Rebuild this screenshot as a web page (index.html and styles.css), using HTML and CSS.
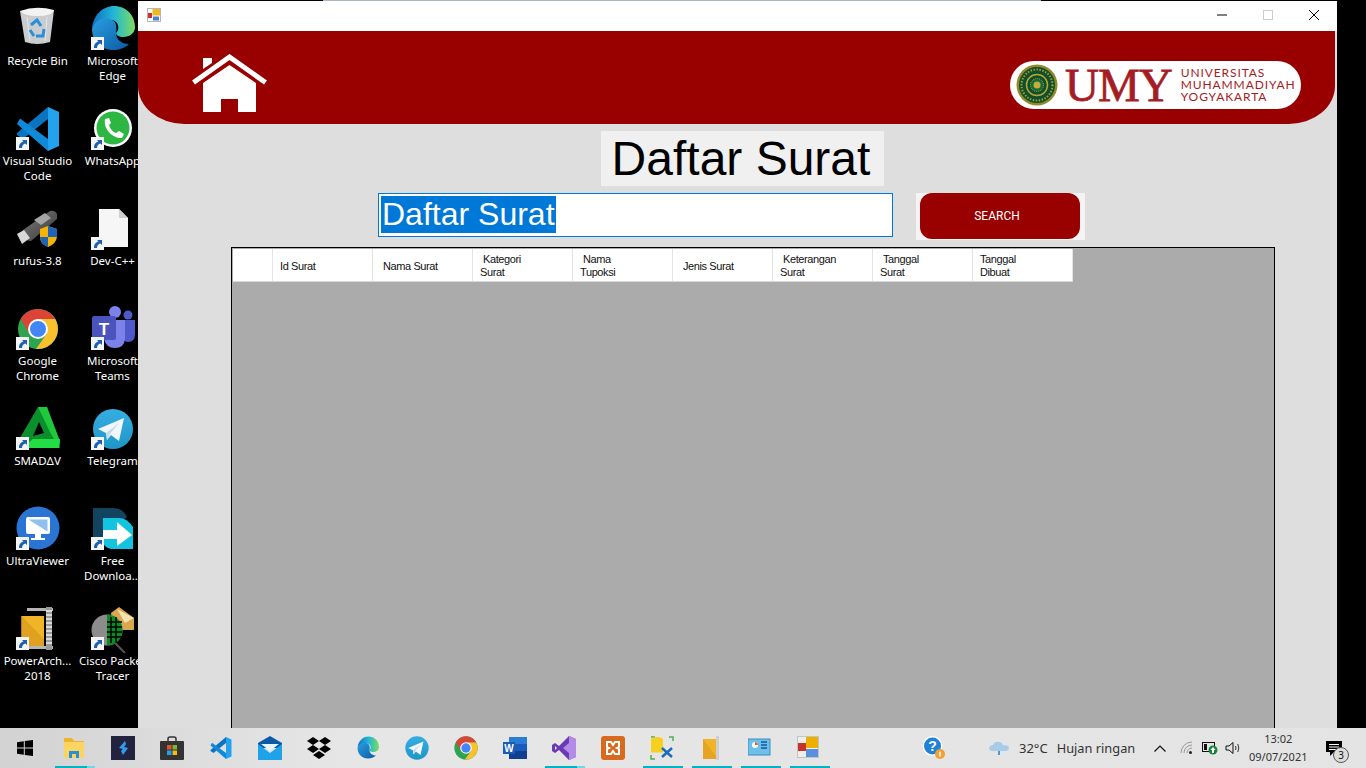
FILE: index.html
```html
<!DOCTYPE html>
<html lang="id">
<head>
  <meta charset="UTF-8" />
  <meta name="viewport" content="width=device-width, initial-scale=1" />
  <title>Daftar Surat</title>
  <link rel="stylesheet" href="styles.css">
</head>
<body>
  <svg class="defs" width="0" height="0">
    <defs>
      <linearGradient id="edgeA" x1="0" y1="0" x2="1" y2="1"><stop offset="0" stop-color="#2a9fe0"/><stop offset="1" stop-color="#0c59a4"/></linearGradient>
      <linearGradient id="edgeB" x1="0" y1="0.500" x2="1" y2="0.500"><stop offset="0" stop-color="#0f6fc0"/><stop offset="0.500" stop-color="#1fb6d8"/><stop offset="1" stop-color="#7fdc5f"/></linearGradient>
      <linearGradient id="tele" x1="0" y1="0" x2="0" y2="1"><stop offset="0" stop-color="#37aee2"/><stop offset="1" stop-color="#1e96c8"/></linearGradient>
      <linearGradient id="usb" x1="0" y1="0" x2="1" y2="1"><stop offset="0" stop-color="#777"/><stop offset="1" stop-color="#3c3c3c"/></linearGradient>
      <symbol id="i-shortcut" viewBox="0 0 13 13">
        <rect width="13" height="13" fill="#f4f4f4"/>
        <path d="M3 11 C3 7 5 5 7.500 4.500 L6 3 H11 V8 L9.400 6.400 C7.500 7 6 8.500 6 11 Z" fill="#1f5fb0"/>
      </symbol>
      <symbol id="i-edge" viewBox="0 0 48 48">
        <path d="M3 24 C4 10 14 1 25 1 C37 1 46 10 46 22 C46 28 41 32 34 32 C30 32 27 30 27 28 C31 25 30 16 23 15 C13 14 3 20 3 24 Z" fill="url(#edgeB)"/>
        <path d="M3 24 C6 14 16 11 23 15 C28 17 28 24 27 28 C27 34 32 39 40 39 C36 43 30 45 24 45 C12 45 3 36 3 24 Z" fill="url(#edgeA)"/>
      </symbol>
      <symbol id="i-vscode" viewBox="0 0 48 48">
        <polygon points="34,2 34,14 9,34 3,30 3,28" fill="#0a74c0"/>
        <polygon points="6,13.500 34,34 34,46 3,19" fill="#0f8ad8"/>
        <polygon points="34,2 45,7 45,41 34,46" fill="#23a3ee"/>
      </symbol>
      <symbol id="i-chrome" viewBox="0 0 48 48">
        <circle cx="24" cy="24" r="20" fill="#2da44e"/>
        <path d="M24 14 H41.300 A20 20 0 0 1 22 43.900 L32.700 29 Z" fill="#fbc02d"/>
        <path d="M6.700 14 A20 20 0 0 1 41.300 14 H24 L15.300 29 Z" fill="#db4437"/>
        <circle cx="24" cy="24" r="10" fill="#fff"/>
        <circle cx="24" cy="24" r="8" fill="#4285f4"/>
      </symbol>
      <symbol id="i-telegram" viewBox="0 0 48 48">
        <circle cx="24" cy="24" r="20" fill="url(#tele)"/>
        <path d="M9 24 L35 13 L30 36 L22 30 L18 35 L17 28 Z" fill="#f2f7fb"/>
        <path d="M17 28 L30 18 L21 29 L18 35 Z" fill="#c8daea"/>
      </symbol>
    </defs>
  </svg>

  <div class="screen">
    <aside class="desktop">
      <div class="tile">
        <div class="tile-icon">
          <svg viewBox="0 0 48 48"><path d="M6 6 L40 5 L36 37 Q23 41 11 37 Z" fill="#c9cdd0"/><path d="M6 6 Q22 0 40 5 Q38 11 24 11 Q10 11 6 6 Z" fill="#f3f3f3"/><path d="M13 12 L16 36 M33 12 L31 36" stroke="#e6e6e6"/><path d="M17 20 L23 15 L27 21 M30 24 L29 31 L22 31 M16 25 L20 31" stroke="#2a8fd8" stroke-width="3" fill="none"/></svg>
        </div>
        <span class="tile-label">Recycle Bin</span>
      </div>
      <div class="tile">
        <div class="tile-icon"><svg><use href="#i-edge"/></svg><svg class="shortcut"><use href="#i-shortcut"/></svg></div>
        <span class="tile-label">Microsoft<br>Edge</span>
      </div>
      <div class="tile">
        <div class="tile-icon"><svg><use href="#i-vscode"/></svg><svg class="shortcut"><use href="#i-shortcut"/></svg></div>
        <span class="tile-label">Visual Studio<br>Code</span>
      </div>
      <div class="tile">
        <div class="tile-icon">
          <svg viewBox="0 0 48 48"><circle cx="24" cy="23" r="19" fill="#fff"/><circle cx="24" cy="23" r="16.500" fill="#2bb741"/><path d="M16 14 L20 13 L22 18 L20 20 C21 24 24 27 27 28 L30 26 L35 29 L33 33 C25 34 14 25 16 14 Z" fill="#fff"/></svg>
          <svg class="shortcut"><use href="#i-shortcut"/></svg>
        </div>
        <span class="tile-label">WhatsApp</span>
      </div>
      <div class="tile">
        <div class="tile-icon">
          <svg viewBox="0 0 48 48"><path d="M9 25 L36 6 Q41 5 43 9 L43 14 L17 36 L11 35 Z" fill="url(#usb)"/><path d="M20 15 L31 8 L37 13 L27 20 Z" fill="#a5a5a5"/><path d="M3 29 L10 25 L16 33 L8 39 Z" fill="#d8d8d8"/><path d="M26 24 L34 21 L43 24 V32 Q42 39 34 42 Q26 39 26 32 Z" fill="#f4b400"/><path d="M34 21 L43 24 V32 H34 Z M26 32 H34 V42 Q26 39 26 32 Z" fill="#1d63b8"/></svg>
        </div>
        <span class="tile-label">rufus-3.8</span>
      </div>
      <div class="tile">
        <div class="tile-icon">
          <svg viewBox="0 0 48 48"><path d="M10 4 H30 L39 13 V42 H10 Z" fill="#f6f6f6"/><path d="M30 4 L39 13 H30 Z" fill="#cfcfcf"/></svg>
          <svg class="shortcut"><use href="#i-shortcut"/></svg>
        </div>
        <span class="tile-label">Dev-C++</span>
      </div>
      <div class="tile">
        <div class="tile-icon"><svg><use href="#i-chrome"/></svg><svg class="shortcut"><use href="#i-shortcut"/></svg></div>
        <span class="tile-label">Google<br>Chrome</span>
      </div>
      <div class="tile">
        <div class="tile-icon">
          <svg viewBox="0 0 48 48"><circle cx="26" cy="7" r="6" fill="#7b83eb"/><circle cx="39" cy="10" r="4.500" fill="#5059c9"/><path d="M33 15 H46 V29 Q46 37 39 37 Q33 37 33 30 Z" fill="#5059c9"/><path d="M15 15 H36 V34 Q35 43 26 43 Q17 43 15 34 Z" fill="#7b83eb"/><rect x="3" y="11" width="24" height="24" rx="2" fill="#4b53bc"/><text class="svg-t" x="15" y="30">T</text></svg>
          <svg class="shortcut"><use href="#i-shortcut"/></svg>
        </div>
        <span class="tile-label">Microsoft<br>Teams</span>
      </div>
      <div class="tile">
        <div class="tile-icon">
          <svg viewBox="0 0 48 48"><path d="M24 2 L3 38 L8 43 H46 L33 2 Z" fill="#0b8f2c"/><path d="M24 2 H33 L46 36 L45 43 L36 27 Z" fill="#1fc93b"/><path d="M8 43 L19 34 H46 L45 43 Z" fill="#22dd44"/><path d="M25 17 L30 28 L19 31 Z" fill="#000"/></svg>
          <svg class="shortcut"><use href="#i-shortcut"/></svg>
        </div>
        <span class="tile-label">SMADΔV</span>
      </div>
      <div class="tile">
        <div class="tile-icon"><svg><use href="#i-telegram"/></svg><svg class="shortcut"><use href="#i-shortcut"/></svg></div>
        <span class="tile-label">Telegram</span>
      </div>
      <div class="tile">
        <div class="tile-icon">
          <svg viewBox="0 0 48 48"><circle cx="24" cy="23" r="21.500" fill="#2a75d3"/><rect x="12" y="12" width="24" height="17" rx="2" fill="#fff"/><path d="M14.500 14.500 H33.500 V26.500 Z" fill="#8fc0f0"/><path d="M21 29 H27 V33 H31 V35 H17 V33 H21 Z" fill="#fff"/></svg>
          <svg class="shortcut"><use href="#i-shortcut"/></svg>
        </div>
        <span class="tile-label">UltraViewer</span>
      </div>
      <div class="tile">
        <div class="tile-icon">
          <svg viewBox="0 0 48 48"><path d="M4 3 H24 Q34 3 38 12 L8 38 Q4 36 4 30 Z" fill="#12445f"/><path d="M14 13 H30 Q38 13 44 22 V44 H22 Q14 42 14 36 Z" fill="#13c4e0"/><path d="M14 25 H28 V17 L43 30 L28 41 V34 H14 Z" fill="#fff"/></svg>
          <svg class="shortcut"><use href="#i-shortcut"/></svg>
        </div>
        <span class="tile-label">Free<br>Downloa...</span>
      </div>
      <div class="tile">
        <div class="tile-icon">
          <svg viewBox="0 0 48 48"><rect x="13" y="3" width="26" height="3" fill="#b5b5b5"/><rect x="13" y="41" width="26" height="3" fill="#b5b5b5"/><path d="M7.500 11 H30 V41 H7.500 Z" fill="#f0b429"/><path d="M7.500 11 L30 34 V41 H7.500 Z" fill="#e0a020"/><rect x="32" y="2" width="6" height="43" fill="#9a9a9a"/><path d="M32 6 H38 M32 10 H38 M32 14 H38 M32 18 H38 M32 22 H38 M32 26 H38 M32 30 H38 M32 34 H38 M32 38 H38" stroke="#eee" stroke-width="1.500"/></svg>
          <svg class="shortcut"><use href="#i-shortcut"/></svg>
        </div>
        <span class="tile-label">PowerArch...<br>2018</span>
      </div>
      <div class="tile">
        <div class="tile-icon">
          <svg viewBox="0 0 48 48"><path d="M22 8 L30 2 L45 13 V25 H24 Z" fill="#d8a84e"/><path d="M28 4 L45 13 L36 18 Z" fill="#f3e1b0"/><circle cx="18" cy="25" r="15.500" fill="#8c8c8c"/><path d="M18 9.500 A15.500 15.500 0 0 1 18 40.500 Z" fill="#0c8a24"/><path d="M22 12 V38 M27 12 V38 M18 17 H33 M18 22 H33 M18 27 H33 M18 32 H33" stroke="#000" stroke-width="1.500"/><path d="M26 38 L36 48" stroke="#555" stroke-width="2"/></svg>
          <svg class="shortcut"><use href="#i-shortcut"/></svg>
        </div>
        <span class="tile-label">Cisco Packet<br>Tracer</span>
      </div>
    </aside>

    <section class="window">
      <div class="titlebar">
        <svg class="app-icon" viewBox="0 0 14 14">
          <rect x="0.500" y="0.500" width="13" height="13" fill="#fff" stroke="#b5b5b5"/>
          <rect x="1" y="5" width="4" height="5" fill="#c8322c"/>
          <rect x="5.500" y="1" width="7.500" height="6.500" fill="#f0b820"/>
          <rect x="6" y="8.500" width="6" height="4" fill="#4a7fd8"/>
        </svg>
        <div class="win-btns">
          <span class="win-btn"><svg viewBox="0 0 10 10"><path d="M0 5 H10" stroke="#000"/></svg></span>
          <span class="win-btn"><svg viewBox="0 0 10 10"><rect x="0.500" y="0.500" width="9" height="9" fill="none" stroke="#ccc"/></svg></span>
          <span class="win-btn"><svg viewBox="0 0 10 10"><path d="M0 0 L10 10 M10 0 L0 10" stroke="#000"/></svg></span>
        </div>
      </div>

      <div class="form-body">
        <header class="banner">
          <svg class="home" viewBox="0 0 76 60">
            <path d="M11 29 V58 H29 V45 H46 V58 H64 V29 L37.500 11 Z" fill="#fff"/>
            <path d="M11 4 H20 V9 L11 15 Z" fill="#fff"/>
            <path d="M1.500 28.500 L37.500 3 L73.500 28.500" fill="none" stroke="#fff" stroke-width="5"/>
          </svg>
          <div class="logo">
            <svg class="seal" viewBox="0 0 42 42">
              <circle cx="21" cy="21" r="20.500" fill="#8f8a2a"/>
              <circle cx="21" cy="21" r="18" fill="#0f4f2a"/>
              <circle cx="21" cy="21" r="15.500" fill="none" stroke="#a89a35" stroke-width="2" stroke-dasharray="1.500 1.500"/>
              <circle cx="21" cy="21" r="10.500" fill="none" stroke="#b9a53a" stroke-width="1.500"/>
              <circle cx="21" cy="21" r="6.500" fill="#1a6a35" stroke="#b9a53a" stroke-dasharray="1 1"/>
              <circle cx="21" cy="21" r="3.500" fill="#c3ad3c"/>
            </svg>
            <span class="logo-umy">UMY</span>
            <div class="logo-name">
              <div>UNIVERSITAS</div>
              <div>MUHAMMADIYAH</div>
              <div>YOGYAKARTA</div>
            </div>
          </div>
        </header>

        <div class="title-row">
          <h1 class="title">Daftar Surat</h1>
        </div>

        <div class="search-row">
          <div class="search-box"><span class="selected">Daftar Surat</span></div>
          <div class="search-wrap"><button class="search-btn">SEARCH</button></div>
        </div>

        <div class="grid">
          <div class="grid-head">
            <div class="cell cell-row"></div>
            <div class="cell"><span>Id Surat</span></div>
            <div class="cell cell-wide"><span>Nama Surat</span></div>
            <div class="cell"><span class="hang">Kategori<br>Surat</span></div>
            <div class="cell"><span class="hang">Nama<br>Tupoksi</span></div>
            <div class="cell cell-wide"><span>Jenis Surat</span></div>
            <div class="cell"><span class="hang">Keterangan<br>Surat</span></div>
            <div class="cell"><span class="hang">Tanggal<br>Surat</span></div>
            <div class="cell"><span>Tanggal<br>Dibuat</span></div>
          </div>
        </div>
      </div>
    </section>
  </div>

  <footer class="taskbar">
    <div class="task"><svg class="ic-start" viewBox="0 0 16 16"><path d="M0 2.300 L6.800 1.300 V7.500 H0 Z M7.800 1.100 L16 0 V7.500 H7.800 Z M0 8.500 H6.800 V14.700 L0 13.700 Z M7.800 8.500 H16 V16 L7.800 14.900 Z" fill="#000"/></svg></div>
    <div class="task on part"><svg class="ic" viewBox="0 0 24 24"><path d="M2 2 H10 L12 5 H22 V22 H2 Z" fill="#f0b429"/><path d="M2 6 H22 V22 H2 Z" fill="#fcd462"/><path d="M7 22 V15 H17 V22 H14 V18 H10 V22 Z" fill="#2a8fd8"/></svg></div>
    <div class="task"><svg class="ic" viewBox="0 0 24 24"><rect width="24" height="24" fill="#24233f"/><path d="M14 5 L8 12 L12 13 L10 15 L12 19 L17 12 L13 11 L15 8 Z" fill="#2d9ff0"/></svg></div>
    <div class="task"><svg class="ic" viewBox="0 0 24 24"><path d="M8 6 V3 Q8 1 10 1 H14 Q16 1 16 3 V6" fill="none" stroke="#333" stroke-width="1.500"/><rect y="5" width="24" height="19" rx="1" fill="#333"/><rect x="7" y="9" width="4.500" height="4.500" fill="#e8512e"/><rect x="12.500" y="9" width="4.500" height="4.500" fill="#7cb82f"/><rect x="7" y="14.500" width="4.500" height="4.500" fill="#1fa3e8"/><rect x="12.500" y="14.500" width="4.500" height="4.500" fill="#fcb80e"/></svg></div>
    <div class="task"><svg class="ic"><use href="#i-vscode"/></svg></div>
    <div class="task"><svg class="ic" viewBox="0 0 24 24"><path d="M0 7 L12 0 L24 7 V12 H0 Z" fill="#0b5aa8"/><path d="M3 8 H21 L12 15 Z" fill="#e8f4fc"/><path d="M0 8 L12 17 L24 8 V24 H0 Z" fill="#1fa3e8"/></svg></div>
    <div class="task"><svg class="ic" viewBox="0 0 24 24"><path d="M6 1 L12 5 L6 9 L0 5 Z M18 1 L24 5 L18 9 L12 5 Z M6 9 L12 13 L6 17 L0 13 Z M18 9 L24 13 L18 17 L12 13 Z M12 15 L18 19 L12 23 L6 19 Z" fill="#000"/></svg></div>
    <div class="task"><svg class="ic"><use href="#i-edge"/></svg></div>
    <div class="task"><svg class="ic ic-big"><use href="#i-telegram"/></svg></div>
    <div class="task"><svg class="ic ic-big"><use href="#i-chrome"/></svg></div>
    <div class="task"><svg class="ic" viewBox="0 0 24 24"><rect x="6" y="1" width="18" height="22" fill="#2b7cd3"/><rect x="6" y="8" width="18" height="7" fill="#185abd"/><rect x="6" y="15" width="18" height="8" fill="#103f91"/><rect y="6" width="12" height="12" fill="#1a5bb5"/><text class="svg-w" x="6" y="15.500">W</text></svg></div>
    <div class="task on part"><svg class="ic" viewBox="0 0 24 24"><path d="M17 0 L24 3 V21 L17 24 L7 14 L3 17 L0 15 V9 L3 7 L7 10 Z" fill="#6a3ab5"/><path d="M17 0 L24 3 V21 L17 24 Z M17 7 L11 12 L17 17 Z" fill="#b58be8" fill-rule="evenodd"/><path d="M3 10 V14 L5 12 Z" fill="#e3e3e3"/></svg></div>
    <div class="task"><svg class="ic" viewBox="0 0 24 24"><rect width="24" height="24" rx="3" fill="#d86a20"/><path d="M6 6 H10 L12 9 L14 6 H18 V11 L16 12 L18 13 V18 H14 L12 15 L10 18 H6 V13 L8 12 L6 11 Z" fill="none" stroke="#fff" stroke-width="2"/></svg></div>
    <div class="task on"><svg class="ic" viewBox="0 0 24 24"><path d="M1 1 H5 M19 1 H23 V5 M1 19 V23 H5" fill="none" stroke="#4caf50" stroke-width="1.500"/><ellipse cx="7" cy="3.500" rx="6" ry="2.500" fill="#f5d020"/><rect x="1" y="3.500" width="12" height="13" fill="#f5d020"/><path d="M12 21 L22 12 M12 12 L22 21" stroke="#1a6bb8" stroke-width="2.500"/></svg></div>
    <div class="task on"><svg class="ic" viewBox="0 0 24 24"><rect x="17" y="0" width="3" height="24" fill="#cfcfcf"/><path d="M4 3 H17 V23 H4 Z" fill="#f0b429"/><path d="M4 3 L17 20 V23 H4 Z" fill="#e5a520"/></svg></div>
    <div class="task on"><svg class="ic" viewBox="0 0 24 24"><rect y="3" width="22" height="16" fill="#6fbfe8" stroke="#3a8fc0"/><circle cx="7" cy="9" r="3" fill="#fff"/><path d="M7 6 A3 3 0 0 1 10 9 H7 Z" fill="#d8702a"/><path d="M13 6 H19 M13 9 H19 M13 12 H19" stroke="#0b5aa8" stroke-width="1.500"/></svg></div>
    <div class="task on"><svg class="ic" viewBox="0 0 24 24"><rect x="0.500" y="0.500" width="21" height="21" fill="#eee" stroke="#c4c4c4"/><rect x="9" y="1" width="12" height="11" fill="#eeb000"/><rect x="1" y="7" width="8" height="8" fill="#c8322c"/><rect x="9" y="13" width="12" height="8" fill="#5a8fe0"/></svg></div>

    <div class="tray">
      <svg class="tray-help" viewBox="0 0 24 24"><circle cx="10.500" cy="10" r="10" fill="#fff"/><circle cx="10.500" cy="10" r="8.500" fill="#1f82d8"/><text class="svg-q" x="10.500" y="15">?</text><circle cx="18" cy="18" r="5" fill="#f0a030"/><rect x="17.300" y="15.500" width="1.500" height="5" fill="#fff"/></svg>
      <svg class="tray-cloud" viewBox="0 0 20 16"><path d="M4 11 Q0 11 0 8 Q1 5 4 5 Q6 1 10 2 Q13 2 14 5 Q20 5 20 8 Q20 11 16 11 Z" fill="#a8cce8"/><path d="M10 11 V15" stroke="#4a9ad8" stroke-width="2"/></svg>
      <span class="tray-temp">32°C</span>
      <span class="tray-weather">Hujan ringan</span>
      <svg class="tray-caret" viewBox="0 0 12 7"><path d="M0.500 6.500 L6 1 L11.500 6.500" fill="none" stroke="#111" stroke-width="1.200"/></svg>
      <svg class="tray-wifi" viewBox="0 0 14 14"><path d="M1 12 A11 11 0 0 1 12 1 M4 12 A8 8 0 0 1 12 4 M7 12 A5 5 0 0 1 12 7" fill="none" stroke="#999" stroke-width="1"/><circle cx="10.500" cy="11.500" r="1.500" fill="#222"/></svg>
      <svg class="tray-batt" viewBox="0 0 16 14"><rect x="0.500" y="1.500" width="12" height="9" fill="none" stroke="#111"/><rect x="2" y="3" width="3" height="6" fill="#111"/><circle cx="11" cy="9" r="4.500" fill="#17853a"/><path d="M11 6 L13.500 9 H12 V12 H10 V9 H8.500 Z" fill="#fff"/></svg>
      <svg class="tray-sound" viewBox="0 0 16 14"><path d="M1 5 H4 L8 1.500 V12.500 L4 9 H1 Z" fill="none" stroke="#111"/><path d="M10.500 5 Q11.500 7 10.500 9 M12.800 3 Q14.800 7 12.800 11" fill="none" stroke="#333"/></svg>
      <div class="clock"><span>13:02</span><span>09/07/2021</span></div>
      <div class="notif">
        <svg viewBox="0 0 16 15"><path d="M0 0 H16 V11 H8 L4 15 V11 H0 Z" fill="#000"/><path d="M3 3.500 H13 M3 6 H13 M3 8.500 H10" stroke="#fff"/></svg>
        <span class="notif-count">3</span>
      </div>
    </div>
  </footer>
</body>
</html>
```

FILE: styles.css
```css
* {
  box-sizing: border-box;
}

html, body {
  margin: 0;
  height: 100%;
  overflow: hidden;
}

body {
  background: #000;
  font-family: "Liberation Sans", Arial, sans-serif;
  display: flex;
  flex-direction: column;
}

.defs {
  position: absolute;
}

.screen {
  display: flex;
  height: 728px;
  padding-right: 29px;
}

/* desktop icons */
.desktop {
  width: 138px;
  flex: none;
  overflow: hidden;
  display: grid;
  grid-template-columns: 75px 75px;
  grid-auto-rows: 100px;
  font-family: "Noto Sans", sans-serif;
}

.tile {
  display: flex;
  flex-direction: column;
  align-items: center;
  padding-top: 5px;
}

.tile-icon {
  position: relative;
  width: 48px;
  height: 48px;
  flex: none;
}

.tile-icon svg {
  width: 48px;
  height: 48px;
  display: block;
}

.tile-icon svg.shortcut {
  position: absolute;
  left: 2.500px;
  top: 32px;
  width: 13px;
  height: 13px;
}

.tile-label {
  color: #fff;
  font-size: 11.500px;
  line-height: 15px;
  text-align: center;
  white-space: nowrap;
}

.svg-t {
  fill: #fff;
  font: bold 17px "Liberation Sans", sans-serif;
  text-anchor: middle;
}

/* form window */
.window {
  flex: 1;
  padding-top: 1px;
  background: #000;
  display: flex;
  flex-direction: column;
  position: relative;
}

.window::before {
  content: "";
  position: absolute;
  top: 0;
  left: 185px;
  width: 718px;
  height: 1px;
  background: #a9b4c8;
}

.titlebar {
  height: 30px;
  flex: none;
  background: #fff;
  display: flex;
  align-items: center;
  justify-content: space-between;
  padding: 0 0 2px 9px;
}

.app-icon {
  width: 14px;
  height: 14px;
}

.win-btns {
  display: flex;
}

.win-btn {
  width: 46px;
  height: 28px;
  display: flex;
  align-items: center;
  justify-content: center;
}

.win-btn svg {
  width: 10px;
  height: 10px;
}

.form-body {
  flex: 1;
  background: #dedede;
  display: flex;
  flex-direction: column;
  min-height: 0;
}

.banner {
  height: 93px;
  flex: none;
  width: 1197px;
  background: #990000;
  border-radius: 0 0 46px 46px / 0 0 38px 38px;
  display: flex;
  align-items: flex-start;
  justify-content: space-between;
  padding: 23px 34px 0 54px;
}

.home {
  width: 76px;
  height: 60px;
}

.logo {
  width: 291px;
  height: 48px;
  margin-top: 7px;
  background: #fff;
  border-radius: 24px;
  display: flex;
  align-items: center;
  padding-left: 6px;
  color: #a51c24;
  font-family: "Liberation Serif", serif;
}

.seal {
  width: 42px;
  height: 42px;
  flex: none;
}

.logo-umy {
  font-size: 47px;
  line-height: 48px;
  margin-left: 7px;
  letter-spacing: -1px;
  -webkit-text-stroke: 0.8px #a51c24;
}

.logo-name {
  font-family: Lato, sans-serif;
  font-size: 12px;
  line-height: 12px;
  margin-left: 9px;
  letter-spacing: 0.9px;
  white-space: nowrap;
}

.title-row {
  display: flex;
  margin: 7px 0 0 463px;
}

.title {
  margin: 0;
  width: 283px;
  height: 55px;
  padding-right: 3px;
  background: #f0f0f0;
  color: #000;
  font-size: 48px;
  font-weight: 400;
  line-height: 55px;
  text-align: center;
  white-space: nowrap;
}

.search-row {
  display: flex;
  margin: 7px 0 0 240px;
}

.search-box {
  width: 515px;
  height: 44px;
  background: #fff;
  border: 1px solid #0078d7;
  padding: 2px 0 0 2px;
}

.selected {
  display: inline-block;
  height: 37px;
  background: #0078d7;
  color: #fff;
  font-size: 32px;
  line-height: 36px;
  padding: 0 1px;
}

.search-wrap {
  width: 169px;
  height: 47px;
  margin-left: 23px;
  background: #f4f4f4;
  padding-left: 4px;
}

.search-btn {
  width: 160px;
  height: 46px;
  padding: 0 6px 0 0;
  border: 0;
  border-radius: 12px;
  background: #990000;
  color: #fff;
  font-family: Roboto, sans-serif;
  font-size: 12px;
}

.grid {
  flex: 1;
  width: 1044px;
  margin: 7px 0 0 93px;
  background: #ababab;
  border: solid #000;
  border-width: 1px 1px 0;
  padding: 1px 0 0 1px;
  min-height: 0;
}

.grid-head {
  display: flex;
  width: 840px;
  height: 33px;
  background: #fff;
  border-bottom: 1px solid #d8d8d8;
  font-size: 11px;
  line-height: 13px;
  letter-spacing: -0.4px;
  color: #111;
}

.cell {
  width: 100px;
  flex: none;
  display: flex;
  align-items: center;
  padding: 2px 0 0 7px;
  border-right: 1px solid #e4e4e4;
  white-space: nowrap;
}

.cell-row {
  width: 40px;
}

.cell-wide {
  padding-left: 10px;
}

.hang {
  text-indent: 3px;
}

/* taskbar */
.taskbar {
  height: 40px;
  flex: none;
  background: linear-gradient(90deg, #d2d2d2, #e6e6e6 25%, #e4e4e4);
  display: flex;
  align-items: center;
}

.task {
  position: relative;
  width: 49px;
  height: 40px;
  flex: none;
  display: flex;
  align-items: center;
  justify-content: center;
}

.task.on::after {
  content: "";
  position: absolute;
  left: 6px;
  bottom: 0;
  width: 40px;
  height: 2px;
  background: #00b4c4;
}

.task.part::after {
  background: linear-gradient(90deg, #00b4c4 80%, #6fd8e0 80%);
}

.ic {
  width: 24px;
  height: 24px;
}

.ic-big {
  width: 28px;
  height: 28px;
}

.ic-start {
  width: 16px;
  height: 16px;
}

.svg-w {
  fill: #fff;
  font: bold 10px "Liberation Sans", sans-serif;
  text-anchor: middle;
}

.svg-q {
  fill: #fff;
  font: bold 14px "Liberation Sans", sans-serif;
  text-anchor: middle;
}

.tray {
  display: flex;
  align-items: center;
  height: 40px;
  margin-left: 89px;
  font-family: "Noto Sans", sans-serif;
  color: #333;
}

.tray-help {
  width: 24px;
  height: 24px;
}

.tray-cloud {
  width: 20px;
  height: 16px;
  margin-left: 43px;
}

.tray-temp {
  font-size: 13px;
  margin-left: 10px;
}

.tray-weather {
  font-size: 12.800px;
  margin-left: 9px;
}

.tray-caret {
  width: 12px;
  height: 7px;
  margin-left: 19px;
}

.tray-wifi {
  width: 14px;
  height: 14px;
  margin-left: 14px;
}

.tray-batt {
  width: 16px;
  height: 14px;
  margin-left: 8px;
}

.tray-sound {
  width: 16px;
  height: 14px;
  margin-left: 7px;
}

.clock {
  width: 58px;
  margin-left: 8px;
  display: flex;
  flex-direction: column;
  align-items: center;
  font-size: 11px;
  line-height: 18px;
}

.notif {
  position: relative;
  width: 18px;
  margin-left: 19px;
}

.notif svg {
  width: 16px;
  height: 15px;
  display: block;
}

.notif-count {
  position: absolute;
  left: 7px;
  top: 6px;
  width: 16px;
  height: 16px;
  border-radius: 50%;
  border: 1px solid #555;
  background: #ddd;
  font-size: 10px;
  line-height: 14px;
  text-align: center;
  color: #111;
}
```
